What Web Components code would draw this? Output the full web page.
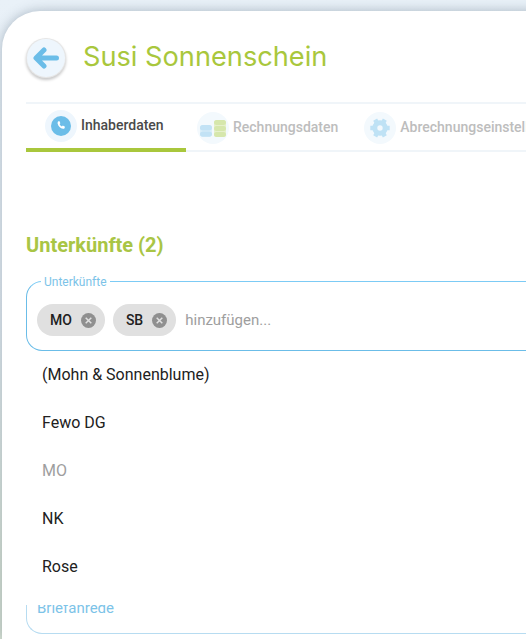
<!DOCTYPE html>
<html lang="de">
<head>
<meta charset="utf-8">
<title>Susi Sonnenschein</title>
<style>
  html, body { margin: 0; height: 100%; overflow: hidden; }
  body {
    font-family: Roboto, "Liberation Sans", sans-serif;
    background: linear-gradient(180deg, #e9f1f8 0%, #e2eaf0 50%, #d6e0d2 90%);
  }
</style>
</head>
<body>
<app-shell>
  <page-header name="Susi Sonnenschein"></page-header>
  <tab-bar>
    <tab-item active label="Inhaberdaten" icon="phone"></tab-item>
    <tab-item label="Rechnungsdaten" icon="coins"></tab-item>
    <tab-item label="Abrechnungseinstellungen" icon="gear"></tab-item>
  </tab-bar>
  <section-title>Unterkünfte (2)</section-title>
  <chip-select label="Unterkünfte" placeholder="hinzufügen...">
    <select-chip>MO</select-chip>
    <select-chip>SB</select-chip>
    <menu-item slot="menu">(Mohn &amp; Sonnenblume)</menu-item>
    <menu-item slot="menu">Fewo DG</menu-item>
    <menu-item slot="menu" disabled>MO</menu-item>
    <menu-item slot="menu">NK</menu-item>
    <menu-item slot="menu">Rose</menu-item>
  </chip-select>
  <text-field label="Briefanrede"></text-field>
</app-shell>

<script>
const ICONS = {
  phone: `<svg width="20" height="20" viewBox="0 0 20 20"><circle cx="10" cy="10" r="10" fill="#6bbde8"/><path d="M7 5.400l1.300-.5 1.100 2.300-.8.8c.4 1.100 1.200 2 2.300 2.500l.9-.9 2.200 1.200-.5 1.400c-.3.500-.9.800-1.500.6-2.700-.7-4.700-2.700-5.400-5.400-.1-.7.100-1.400.4-2z" fill="#fff"/></svg>`,
  coins: `<svg width="26" height="17" viewBox="0 0 26 17"><rect x="0" y="5" width="12" height="11.800" rx="3" fill="#dceff9"/><g fill="#c2e2f5"><rect x="0" y="5" width="12" height="5.400" rx="2.700"/><rect x="0" y="11.400" width="12" height="5.400" rx="2.700"/></g><rect x="14" y="0" width="12" height="17" rx="3" fill="#e6f0cc"/><g fill="#d6e7ac"><rect x="14" y="0" width="12" height="5" rx="2.500"/><rect x="14" y="6" width="12" height="5" rx="2.500"/><rect x="14" y="12" width="12" height="5" rx="2.500"/></g></svg>`,
  gear: `<svg width="20" height="20" viewBox="-10 -10 20 20"><circle r="5.200" fill="none" stroke="#bfe2f5" stroke-width="5"/><g stroke="#bfe2f5" stroke-width="4.500"><path d="M6 0H9.700M-6 0H-9.700M3 5.200L4.850 8.400M-3 5.200L-4.850 8.400M3 -5.200L4.850 -8.400M-3 -5.200L-4.850 -8.400"/></g></svg>`
};

class AppShell extends HTMLElement {
  constructor() {
    super();
    this.attachShadow({ mode: 'open' }).innerHTML = `
      <style>
        :host { display: block; height: 100vh; box-sizing: border-box; padding: 11px 0 0 2px; overflow: hidden; }
        .card {
          background: #fff;
          border-radius: 38px 0 0 0;
          box-shadow: 0 0 12px rgba(90, 110, 130, .45);
          height: 100%;
          box-sizing: border-box;
          padding: 0 0 0 24px;
          width: 620px;
          display: flex;
          flex-direction: column;
        }
      </style>
      <div class="card"><slot></slot></div>`;
  }
}
customElements.define('app-shell', AppShell);

class PageHeader extends HTMLElement {
  constructor() {
    super();
    this.attachShadow({ mode: 'open' }).innerHTML = `
      <style>
        :host { display: flex; align-items: center; gap: 18px; height: 91px; box-sizing: border-box; flex: none; }
        button {
          width: 38px; height: 38px; margin: 3px 0 0 1px; padding: 0; border: 0; border-radius: 50%;
          background: #eef6fd;
          box-shadow: 0 0 0 1px #e6e6e6, 0 2px 3px 1px rgba(0, 0, 0, .22);
          display: flex; align-items: center; justify-content: center;
        }
        h1 { margin: 0; font: 400 27.200px Inter, Roboto, sans-serif; color: #a9c73c; }
      </style>
      <button aria-label="zurück"><svg width="26" height="22" viewBox="0 0 26 22"><path d="M11 3L3 11l8 8M4 11H23.500" fill="none" stroke="#6bbde8" stroke-width="5" stroke-linecap="round" stroke-linejoin="round"/></svg></button>
      <h1></h1>`;
    this.shadowRoot.querySelector('h1').textContent = this.getAttribute('name');
  }
}
customElements.define('page-header', PageHeader);

class TabBar extends HTMLElement {
  constructor() {
    super();
    this.attachShadow({ mode: 'open' }).innerHTML = `
      <style>
        :host { display: flex; height: 50px; flex: none; box-sizing: border-box; border-top: 2px solid #f0f5f9; border-bottom: 2px solid #f0f5f9; }
      </style>
      <slot></slot>`;
  }
}
customElements.define('tab-bar', TabBar);

class TabItem extends HTMLElement {
  constructor() {
    super();
    this.attachShadow({ mode: 'open' }).innerHTML = `
      <style>
        :host { display: flex; align-items: center; gap: 4px; box-sizing: border-box; height: 48px; padding: 0 15px 0 11px; font-size: 14px; font-weight: 500; color: #bdbdbd; white-space: nowrap; flex: none; }
        :host([active]) { color: #4a4a4a; border-bottom: 4px solid #a9c73c; width: 160px; padding: 0 0 0 19px; }
        .dot { width: 32px; height: 32px; border-radius: 50%; background: #f3f9fd; display: flex; align-items: center; justify-content: center; flex: none; }
        :host([active]) .dot { background: #eef6fd; }
        span { margin-top: -2px; }
      </style>
      <div class="dot"></div><span></span>`;
    this.shadowRoot.querySelector('.dot').innerHTML = ICONS[this.getAttribute('icon')];
    this.shadowRoot.querySelector('span').textContent = this.getAttribute('label');
  }
}
customElements.define('tab-item', TabItem);

class SectionTitle extends HTMLElement {
  constructor() {
    super();
    this.attachShadow({ mode: 'open' }).innerHTML = `
      <style>
        :host { display: block; flex: none; margin-top: 81px; font-size: 20px; line-height: 24px; font-weight: 700; color: #a9c545; }
      </style>
      <slot></slot>`;
  }
}
customElements.define('section-title', SectionTitle);

class SelectChip extends HTMLElement {
  constructor() {
    super();
    this.attachShadow({ mode: 'open' }).innerHTML = `
      <style>
        :host { display: inline-flex; align-items: center; gap: 9px; height: 32px; padding: 0 9px 0 13px; box-sizing: border-box; border-radius: 16px; background: #e0e0e0; font-size: 14px; font-weight: 500; color: #212121; }
        i { width: 15px; height: 15px; display: block; }
      </style>
      <slot></slot>
      <i><svg width="15" height="15" viewBox="0 0 15 15"><circle cx="7.500" cy="7.500" r="7.500" fill="#8f8f8f"/><path d="M4.700 4.700l5.600 5.600M10.300 4.700l-5.600 5.600" stroke="#e0e0e0" stroke-width="1.500"/></svg></i>`;
  }
}
customElements.define('select-chip', SelectChip);

class MenuItem extends HTMLElement {
  constructor() {
    super();
    this.attachShadow({ mode: 'open' }).innerHTML = `
      <style>
        :host { display: flex; align-items: center; height: 48px; padding: 0 16px; font-size: 16px; color: #212121; }
        :host([disabled]) { color: #9e9e9e; }
      </style>
      <slot></slot>`;
  }
}
customElements.define('menu-item', MenuItem);

class ChipSelect extends HTMLElement {
  constructor() {
    super();
    this.attachShadow({ mode: 'open' }).innerHTML = `
      <style>
        :host { display: block; position: relative; flex: none; margin-top: 24px; z-index: 1; }
        .box {
          height: 70px; box-sizing: border-box; padding: 8px 10px 0;
          border: 1px solid #6bbde8; border-top-color: #7ccbf5; border-radius: 16px;
          display: flex; align-items: center; gap: 8px;
        }
        .legend { position: absolute; left: 15px; top: -6px; padding: 0 3px; background: #fff; font-size: 12px; line-height: 14px; color: #7cc3e8; }
        .ph { font-size: 15px; color: #9e9e9e; margin-left: 1px; }
        .menu { position: absolute; left: 0; right: 0; top: 70px; height: 254px; background: #fff; overflow: hidden; }
        .list { margin-top: -1px; }
      </style>
      <div class="box">
        <slot></slot><span class="ph"></span>
      </div>
      <span class="legend"></span>
      <div class="menu"><div class="list"><slot name="menu"></slot></div></div>`;
    this.shadowRoot.querySelector('.legend').textContent = this.getAttribute('label');
    this.shadowRoot.querySelector('.ph').textContent = this.getAttribute('placeholder');
  }
}
customElements.define('chip-select', ChipSelect);

class TextField extends HTMLElement {
  constructor() {
    super();
    this.attachShadow({ mode: 'open' }).innerHTML = `
      <style>
        :host { display: block; flex: none; margin-top: 227px; height: 56px; box-sizing: border-box; border: 1px solid #b7dcf1; border-right: 0; border-radius: 0 0 0 16px; padding: 21px 0 0 10px; font-size: 15px; line-height: 16px; color: #7cc3e8; }
      </style>
      <span></span>`;
    this.shadowRoot.querySelector('span').textContent = this.getAttribute('label');
  }
}
customElements.define('text-field', TextField);
</script>
</body>
</html>
